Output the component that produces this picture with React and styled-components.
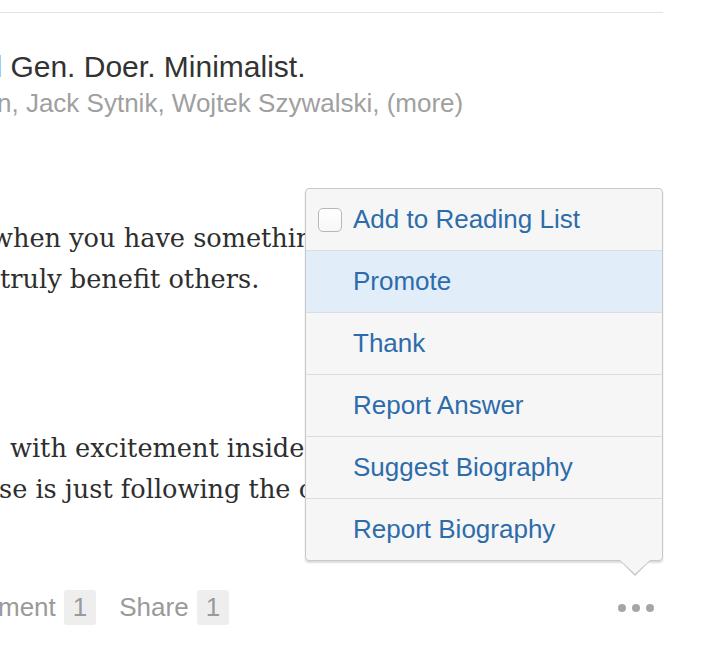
import React from "react";
import styled, { createGlobalStyle } from "styled-components";

const GlobalStyle = createGlobalStyle`
  html, body {
    margin: 0;
    padding: 0;
    background: #ffffff;
    overflow: hidden;
  }
  body {
    font-family: "Liberation Sans", Arial, Helvetica, sans-serif;
  }
`;

const Page = styled.div`
  position: relative;
  width: 663px;
  height: 650px;
  padding-top: 12px;
  box-sizing: border-box;
`;

const Rule = styled.div`
  border-top: 1px solid #e3e3e3;
`;

const Header = styled.div`
  margin-top: 35px;
`;

const Line = styled.div`
  white-space: nowrap;
  text-indent: ${(p) => p.$indent || 0}px;
`;

const Title = styled(Line)`
  font-size: 30px;
  line-height: 38px;
  color: #333333;
`;

const Credits = styled(Line)`
  font-size: 26px;
  line-height: 34px;
  color: #a0a0a0;
`;

const Paragraph = styled.div`
  margin-top: ${(p) => p.$gap}px;
  font-family: "DejaVu Serif", Georgia, serif;
  font-size: 25.6px;
  line-height: 41px;
  color: #2e2e2e;
`;

const Footer = styled.div`
  display: flex;
  align-items: center;
  height: 35px;
  margin-top: 80px;
  font-size: 26px;
  color: #9a9a9a;
`;

const Action = styled.div`
  display: flex;
  align-items: center;
  gap: 8px;
  margin-right: 23px;
`;

const Count = styled.span`
  display: inline-block;
  height: 35px;
  line-height: 35px;
  padding: 0 9px;
  border-radius: 3px;
  background: #eeeeee;
  color: #9a9a9a;
`;

const Dots = styled.div`
  display: flex;
  gap: 6px;
  margin-left: auto;
  padding-right: 9px;
`;

const Dot = styled.span`
  width: 8px;
  height: 8px;
  border-radius: 50%;
  background: #a6a6a6;
`;

const Menu = styled.div`
  position: absolute;
  left: 305px;
  top: 188px;
  width: 358px;
  box-sizing: border-box;
  background: #f6f6f6;
  border: 1px solid #c9c9c9;
  border-radius: 4px;
  box-shadow: 0 2px 2px rgba(0, 0, 0, 0.14);

  &::before,
  &::after {
    content: "";
    position: absolute;
    right: 12px;
    width: 0;
    height: 0;
    border-left: 15px solid transparent;
    border-right: 15px solid transparent;
  }
  &::before {
    bottom: -16px;
    border-top: 15px solid #c4c4c4;
  }
  &::after {
    bottom: -14px;
    border-top: 14px solid #f6f6f6;
  }
`;

const Item = styled.div`
  display: flex;
  align-items: center;
  gap: 11px;
  height: 61px;
  padding: 0 12px;
  font-size: 26px;
  color: #2d6cab;
  background: ${(p) => (p.$active ? "#e1eef9" : "transparent")};
  border-top: ${(p) => (p.$first ? "none" : "1px solid #dddddd")};
  border-radius: ${(p) => (p.$first ? "4px 4px 0 0" : p.$last ? "0 0 4px 4px" : "0")};
`;

const Slot = styled.span`
  flex: 0 0 24px;
  height: 24px;
`;

const Checkbox = styled(Slot)`
  box-sizing: border-box;
  border: 1px solid #b7b7b7;
  border-radius: 5px;
  background: linear-gradient(#ffffff, #f7f7f7);
`;

const items = [
  "Add to Reading List",
  "Promote",
  "Thank",
  "Report Answer",
  "Suggest Biography",
  "Report Biography",
];

export default function App() {
  return (
    <>
      <GlobalStyle />
      <Page>
        <Rule />
        <Header>
          <Title $indent={-123}>Millennial Gen. Doer. Minimalist.</Title>
          <Credits $indent={-3}>n, Jack Sytnik, Wojtek Szywalski, (more)</Credits>
        </Header>
        <Paragraph $gap={98}>
          <Line $indent={-9}>when you have something to say that will</Line>
          <Line>truly benefit others.</Line>
        </Paragraph>
        <Paragraph $gap={128}>
          <Line $indent={10}>with excitement inside you, and the</Line>
          <Line $indent={-1}>se is just following the crowd.</Line>
        </Paragraph>
        <Footer>
          <Action>
            <Line $indent={-2}>ment</Line>
            <Count>1</Count>
          </Action>
          <Action>
            Share
            <Count>1</Count>
          </Action>
          <Dots>
            <Dot />
            <Dot />
            <Dot />
          </Dots>
        </Footer>
        <Menu>
          {items.map((label, i) => (
            <Item
              key={label}
              $first={i === 0}
              $last={i === items.length - 1}
              $active={label === "Promote"}
            >
              {i === 0 ? <Checkbox /> : <Slot />}
              {label}
            </Item>
          ))}
        </Menu>
      </Page>
    </>
  );
}
